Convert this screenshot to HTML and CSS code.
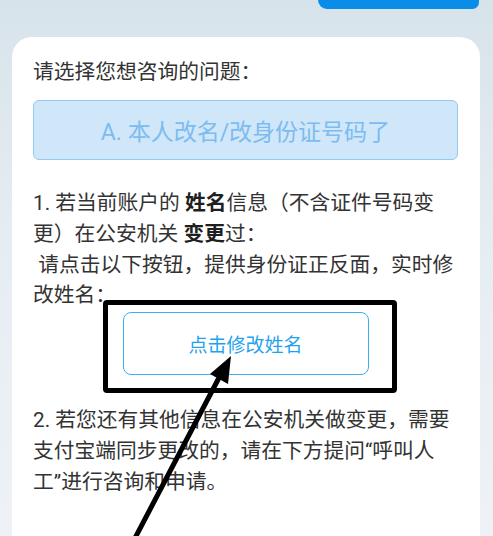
FILE: index.html
```html
<!DOCTYPE html>
<html lang="zh-CN">
<head>
<meta charset="utf-8">
<title>咨询</title>
<link rel="stylesheet" href="styles.css">
</head>
<body>
<div class="page">
  <div class="top-row"><div class="bubble"></div></div>
  <div class="card">
    <div class="title">请选择您想咨询的问题：</div>
    <div class="option">A. 本人改名/改身份证号码了</div>
    <p class="para">1. 若当前账户的 <b>姓名</b>信息（不含证件号码变更）在公安机关 <b>变更</b>过：<br>&nbsp;请点击以下按钮，提供身份证正反面，实时修改姓名：</p>
    <div class="btn-wrap">
      <div class="btn">点击修改姓名</div>
      <div class="highlight"></div>
    </div>
    <p class="para para2">2. 若您还有其他信息在公安机关做变更，需要支付宝端同步更改的，请在下方提问“呼叫人工”进行咨询和申请。</p>
  </div>
  <svg class="arrow" width="493" height="536" viewBox="0 0 493 536">
    <line x1="134" y1="540" x2="222" y2="372" stroke="#000" stroke-width="5" stroke-linecap="round"/>
    <polygon points="231,356 228,384 210,374" fill="#000"/>
  </svg>
</div>
</body>
</html>
```
FILE: styles.css
```css
html, body {
  margin: 0;
  padding: 0;
}
body {
  font-family: Roboto, "Noto Sans CJK SC", sans-serif;
}
.page {
  position: relative;
  width: 493px;
  height: 536px;
  overflow: hidden;
  background: linear-gradient(180deg, #d7e3eb 0%, #e6edf2 45%, #eef2f6 100%);
}
.top-row {
  display: flex;
  justify-content: flex-end;
  padding-right: 14px;
}
.bubble {
  width: 161px;
  height: 9px;
  background: #0a8de8;
  border-radius: 0 0 8px 11px;
}
.card {
  margin: 28px 0 0 12px;
  width: 468px;
  min-height: 520px;
  box-sizing: border-box;
  background: #fff;
  border-radius: 20px 20px 0 0;
  padding: 20px 22px 0 21px;
  color: #333;
}
.title {
  font-size: 20.75px;
  line-height: 31px;
}
.option {
  margin-top: 12px;
  height: 60px;
  box-sizing: border-box;
  border: 1.5px solid #8fcbf5;
  border-radius: 6px;
  background: #d0e6f9;
  color: #7cbcf0;
  font-size: 23px;
  display: flex;
  align-items: center;
  justify-content: center;
}
.para {
  margin: 28px 0 0;
  font-size: 20.75px;
  line-height: 30.8px;
}
.para b {
  color: #1f1f1f;
  font-weight: 700;
}
.para2 {
  margin-top: 30px;
}
.btn-wrap {
  position: relative;
  width: 246px;
  margin: 1px auto 0;
}
.btn {
  height: 63px;
  box-sizing: border-box;
  border: 1.5px solid #3ab0f2;
  border-radius: 8px;
  color: #1fa2ef;
  font-size: 19px;
  display: flex;
  align-items: center;
  justify-content: center;
}
.highlight {
  position: absolute;
  left: -20px;
  top: -12px;
  width: 294px;
  height: 93px;
  box-sizing: border-box;
  border: 5px solid #000;
  border-radius: 4px;
}
.arrow {
  position: absolute;
  left: 0;
  top: 0;
  pointer-events: none;
}
```
